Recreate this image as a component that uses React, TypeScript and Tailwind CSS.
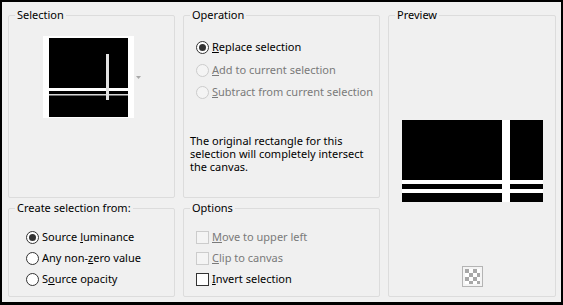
import React from 'react';
import clsx from 'clsx';

function Group({
    title,
    className,
    children,
}: {
    title: string;
    className?: string;
    children?: React.ReactNode;
}) {
    return (
        <fieldset className={clsx('min-w-0 rounded-[2px] border border-[#dcdcdc]', className)}>
            <legend className="ml-[6px] whitespace-nowrap px-[2px] text-[11px] leading-[16px] text-black">
                {title}
            </legend>
            {children}
        </fieldset>
    );
}

function Radio({ checked, disabled }: { checked?: boolean; disabled?: boolean }) {
    return (
        <span
            className={clsx(
                'flex h-[13px] w-[13px] shrink-0 items-center justify-center rounded-full border',
                disabled ? 'border-[#cccccc] bg-[#f4f4f4]' : 'border-[#333333] bg-white'
            )}
        >
            {checked && <span className="h-[7px] w-[7px] rounded-full bg-[#333333]" />}
        </span>
    );
}

function Check({ disabled }: { disabled?: boolean }) {
    return (
        <span
            className={clsx(
                'h-[13px] w-[13px] shrink-0 border',
                disabled ? 'border-[#cccccc] bg-[#f4f4f4]' : 'border-[#333333] bg-white'
            )}
        />
    );
}

function Option({
    control,
    disabled,
    children,
    className,
}: {
    control: React.ReactNode;
    disabled?: boolean;
    children: React.ReactNode;
    className?: string;
}) {
    return (
        <div className={clsx('flex h-[16px] items-center gap-[3px]', className)}>
            {control}
            <span
                className={clsx(
                    'whitespace-nowrap text-[11px] leading-[16px]',
                    disabled ? 'text-[#7a7a7a]' : 'text-black'
                )}
            >
                {children}
            </span>
        </div>
    );
}

export default function App() {
    return (
        <div className="h-[305px] w-[563px] border-2 border-b-[3px] border-black bg-[#f0f0f0] font-['Noto_Sans',sans-serif]">
            <div className="flex pl-[6px] pt-[5px]">
                {/* Left column */}
                <div className="flex w-[167px] flex-col gap-[2px]">
                    <Group title="Selection" className="h-[191px]">
                        <div className="ml-[34px] mt-[13px] flex items-start">
                            <div className="bg-white px-[6px] pb-[1px] pt-[2px]">
                                <svg width="79" height="79" viewBox="0 0 79 79" className="block">
                                    <rect width="79" height="79" fill="#000" />
                                    <rect x="0" y="50" width="79" height="3" fill="#fff" />
                                    <rect x="0" y="56" width="79" height="1.5" fill="#d6d6d6" />
                                    <rect x="57" y="16" width="3" height="46" fill="#e2e2e2" />
                                </svg>
                            </div>
                            <svg width="5" height="3" viewBox="0 0 5 3" className="ml-[2px] mt-[40px]">
                                <path d="M0 0 H5 L2.5 3 Z" fill="#a8a8a8" />
                            </svg>
                        </div>
                    </Group>
                    <Group title="Create selection from:" className="h-[97px]">
                        <div className="ml-[17px] mt-[13px] flex flex-col gap-[5px]">
                            <Option control={<Radio checked />}>
                                Source <u>l</u>uminance
                            </Option>
                            <Option control={<Radio />}>
                                Any non-<u>z</u>ero value
                            </Option>
                            <Option control={<Radio />}>
                                S<u>o</u>urce opacity
                            </Option>
                        </div>
                    </Group>
                </div>

                {/* Middle column */}
                <div className="ml-[8px] flex w-[197px] flex-col gap-[2px]">
                    <Group title="Operation" className="h-[191px]">
                        <div className="ml-[12px] mt-[16px] flex flex-col">
                            <Option control={<Radio checked />}>
                                <u>R</u>eplace selection
                            </Option>
                            <Option control={<Radio disabled />} disabled className="mt-[7px]">
                                <u>A</u>dd to current selection
                            </Option>
                            <Option control={<Radio disabled />} disabled className="mt-[6px]">
                                <u>S</u>ubtract from current selection
                            </Option>
                        </div>
                        <p className="ml-[6px] mt-[34px] whitespace-nowrap text-[11px] leading-[13px] text-black">
                            The original rectangle for this
                            <br />
                            selection will completely intersect
                            <br />
                            the canvas.
                        </p>
                    </Group>
                    <Group title="Options" className="h-[97px]">
                        <div className="ml-[12px] mt-[13px] flex flex-col gap-[5px]">
                            <Option control={<Check disabled />} disabled>
                                <u>M</u>ove to upper left
                            </Option>
                            <Option control={<Check disabled />} disabled>
                                <u>C</u>lip to canvas
                            </Option>
                            <Option control={<Check />}>
                                <u>I</u>nvert selection
                            </Option>
                        </div>
                    </Group>
                </div>

                {/* Preview */}
                <Group title="Preview" className="ml-[8px] h-[290px] w-[168px]">
                    <div className="flex flex-col items-center">
                        <svg width="141" height="82" viewBox="0 0 141 82" className="mt-[97px] block">
                            <rect width="141" height="82" fill="#fff" />
                            <rect x="0" y="0" width="100" height="60" fill="#000" />
                            <rect x="108" y="0" width="33" height="60" fill="#000" />
                            <rect x="0" y="64" width="100" height="5" fill="#000" />
                            <rect x="108" y="64" width="33" height="5" fill="#000" />
                            <rect x="0" y="73" width="100" height="9" fill="#000" />
                            <rect x="108" y="73" width="33" height="9" fill="#000" />
                        </svg>
                        <svg width="21" height="21" viewBox="0 0 21 21" className="mt-[64px] block">
                            <rect x="0.5" y="0.5" width="20" height="20" fill="#f4f4f4" stroke="#b4b4b4" />
                            <rect x="3" y="3" width="15" height="15" fill="#fff" />
                            <rect x="3" y="3" width="4" height="4" fill="#a8a8a8" />
                            <rect x="11" y="3" width="4" height="4" fill="#a8a8a8" />
                            <rect x="7" y="7" width="4" height="4" fill="#a8a8a8" />
                            <rect x="15" y="7" width="3" height="4" fill="#a8a8a8" />
                            <rect x="3" y="11" width="4" height="4" fill="#a8a8a8" />
                            <rect x="11" y="11" width="4" height="4" fill="#a8a8a8" />
                            <rect x="7" y="15" width="4" height="3" fill="#a8a8a8" />
                            <rect x="15" y="15" width="3" height="3" fill="#a8a8a8" />
                        </svg>
                    </div>
                </Group>
            </div>
        </div>
    );
}
